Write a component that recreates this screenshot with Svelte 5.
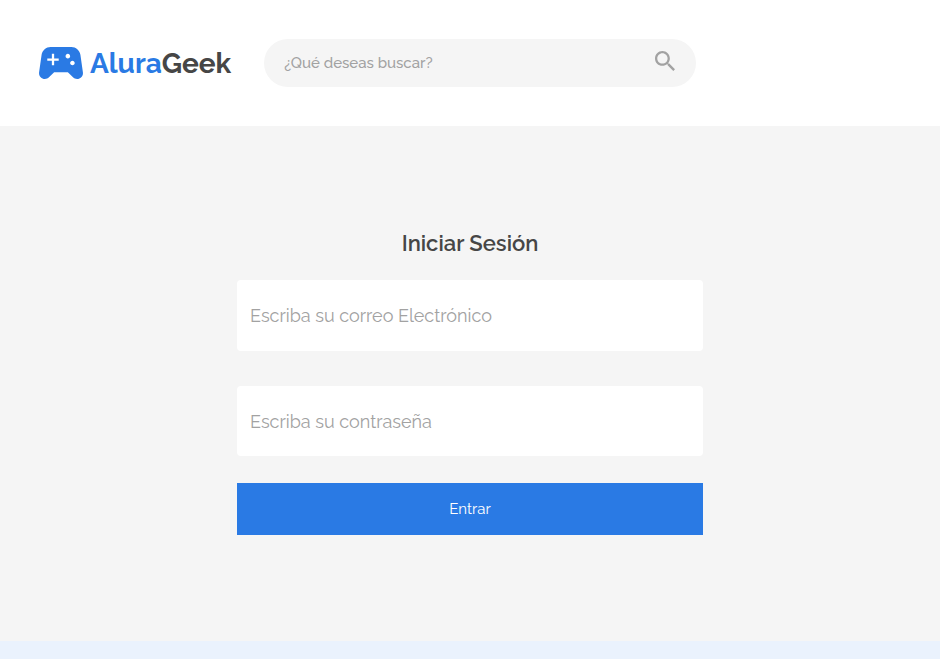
<script>
  let query = $state('');
  let email = $state('');
  let password = $state('');
</script>

<div class="page">
  <header>
    <a class="logo" href="#inicio">
      <svg width="44" height="32" viewBox="2.4 5 19.2 14" aria-hidden="true">
        <path fill="#2a7ae4" d="M21.58 16.09l-1.09-7.66C20.21 6.46 18.52 5 16.53 5H7.47C5.48 5 3.79 6.46 3.51 8.43l-1.09 7.66C2.2 17.63 3.39 19 4.94 19c.68 0 1.32-.27 1.8-.75L9 16h6l2.25 2.25c.48.48 1.13.75 1.8.75 1.56 0 2.75-1.37 2.53-2.91zM11 11H9v2H8v-2H6v-1h2V8h1v2h2v1zm4-1c-.55 0-1-.45-1-1s.45-1 1-1 1 .45 1 1-.45 1-1 1zm2 3c-.55 0-1-.45-1-1s.45-1 1-1 1 .45 1 1-.45 1-1 1z" />
      </svg>
      <span class="name"><span class="accent">Alura</span>Geek</span>
    </a>
    <form class="search" role="search">
      <input type="search" aria-label="¿Qué deseas buscar?" placeholder="¿Qué deseas buscar?" bind:value={query} />
      <button type="submit" aria-label="Buscar">
        <svg width="20" height="20" viewBox="3 3 17.5 17.5" aria-hidden="true">
          <path fill="#a2a2a2" d="M15.5 14h-.79l-.28-.27C15.41 12.59 16 11.11 16 9.5 16 5.91 13.09 3 9.5 3S3 5.91 3 9.5 5.91 16 9.5 16c1.61 0 3.09-.59 4.23-1.57l.27.28v.79l5 4.99L20.49 19l-4.99-5zm-6 0C7.01 14 5 11.99 5 9.5S7.01 5 9.5 5 14 7.01 14 9.5 11.99 14 9.5 14z" />
        </svg>
      </button>
    </form>
  </header>

  <main>
    <form class="login">
      <h1>Iniciar Sesión</h1>
      <input type="email" aria-label="Escriba su correo Electrónico" placeholder="Escriba su correo Electrónico" bind:value={email} />
      <input type="password" aria-label="Escriba su contraseña" placeholder="Escriba su contraseña" bind:value={password} />
      <button type="submit">Entrar</button>
    </form>
  </main>

  <footer></footer>
</div>

<style>
  :global(body) {
    margin: 0;
  }

  .page {
    display: flex;
    flex-direction: column;
    min-height: 100vh;
    background: #fff;
    color: #464646;
    font-family: Raleway, Lato, sans-serif;
  }

  .page * {
    box-sizing: border-box;
  }

  input,
  button {
    border: 0;
    border-radius: 0;
    font-family: inherit;
  }

  input::placeholder {
    color: #a2a2a2;
    opacity: 1;
  }

  header {
    display: flex;
    align-items: center;
    gap: 33px;
    padding: 39px;
  }

  .logo {
    display: flex;
    align-items: center;
    gap: 7px;
    color: inherit;
    text-decoration: none;
  }

  .name {
    padding-top: 2px;
    font-size: 28px;
    line-height: 32px;
    font-weight: 700;
  }

  .accent {
    color: #2a7ae4;
  }

  .search {
    display: flex;
    align-items: center;
    width: 46%;
    max-width: 432px;
    min-width: 200px;
    flex: 1;
    height: 48px;
    padding: 0 21px 0 20px;
    border-radius: 24px;
    background: #f5f5f5;
  }

  .search input {
    flex: 1;
    min-width: 0;
    padding: 0;
    background: none;
    font-size: 15px;
    font-weight: 500;
    appearance: none;
  }

  .search button {
    display: flex;
    padding: 0 0 4px;
    background: none;
  }

  main {
    padding: 103px 20px 106px;
    background: #f5f5f5;
  }

  .login {
    display: flex;
    flex-direction: column;
    max-width: 466px;
    margin: 0 auto;
  }

  h1 {
    margin: 0 0 23px;
    font-size: 22px;
    line-height: 28px;
    font-weight: 600;
    text-align: center;
  }

  .login input {
    height: 71px;
    margin-bottom: 35px;
    padding: 0 13px;
    border-radius: 4px;
    background: #fff;
    font-size: 18px;
  }

  .login input[type='password'] {
    height: 70px;
    margin-bottom: 27px;
  }

  .login button {
    height: 52px;
    background: #2a7ae4;
    color: #fff;
    font-size: 15px;
  }

  footer {
    flex: 1;
    min-height: 18px;
    background: #eaf2fd;
  }
</style>
